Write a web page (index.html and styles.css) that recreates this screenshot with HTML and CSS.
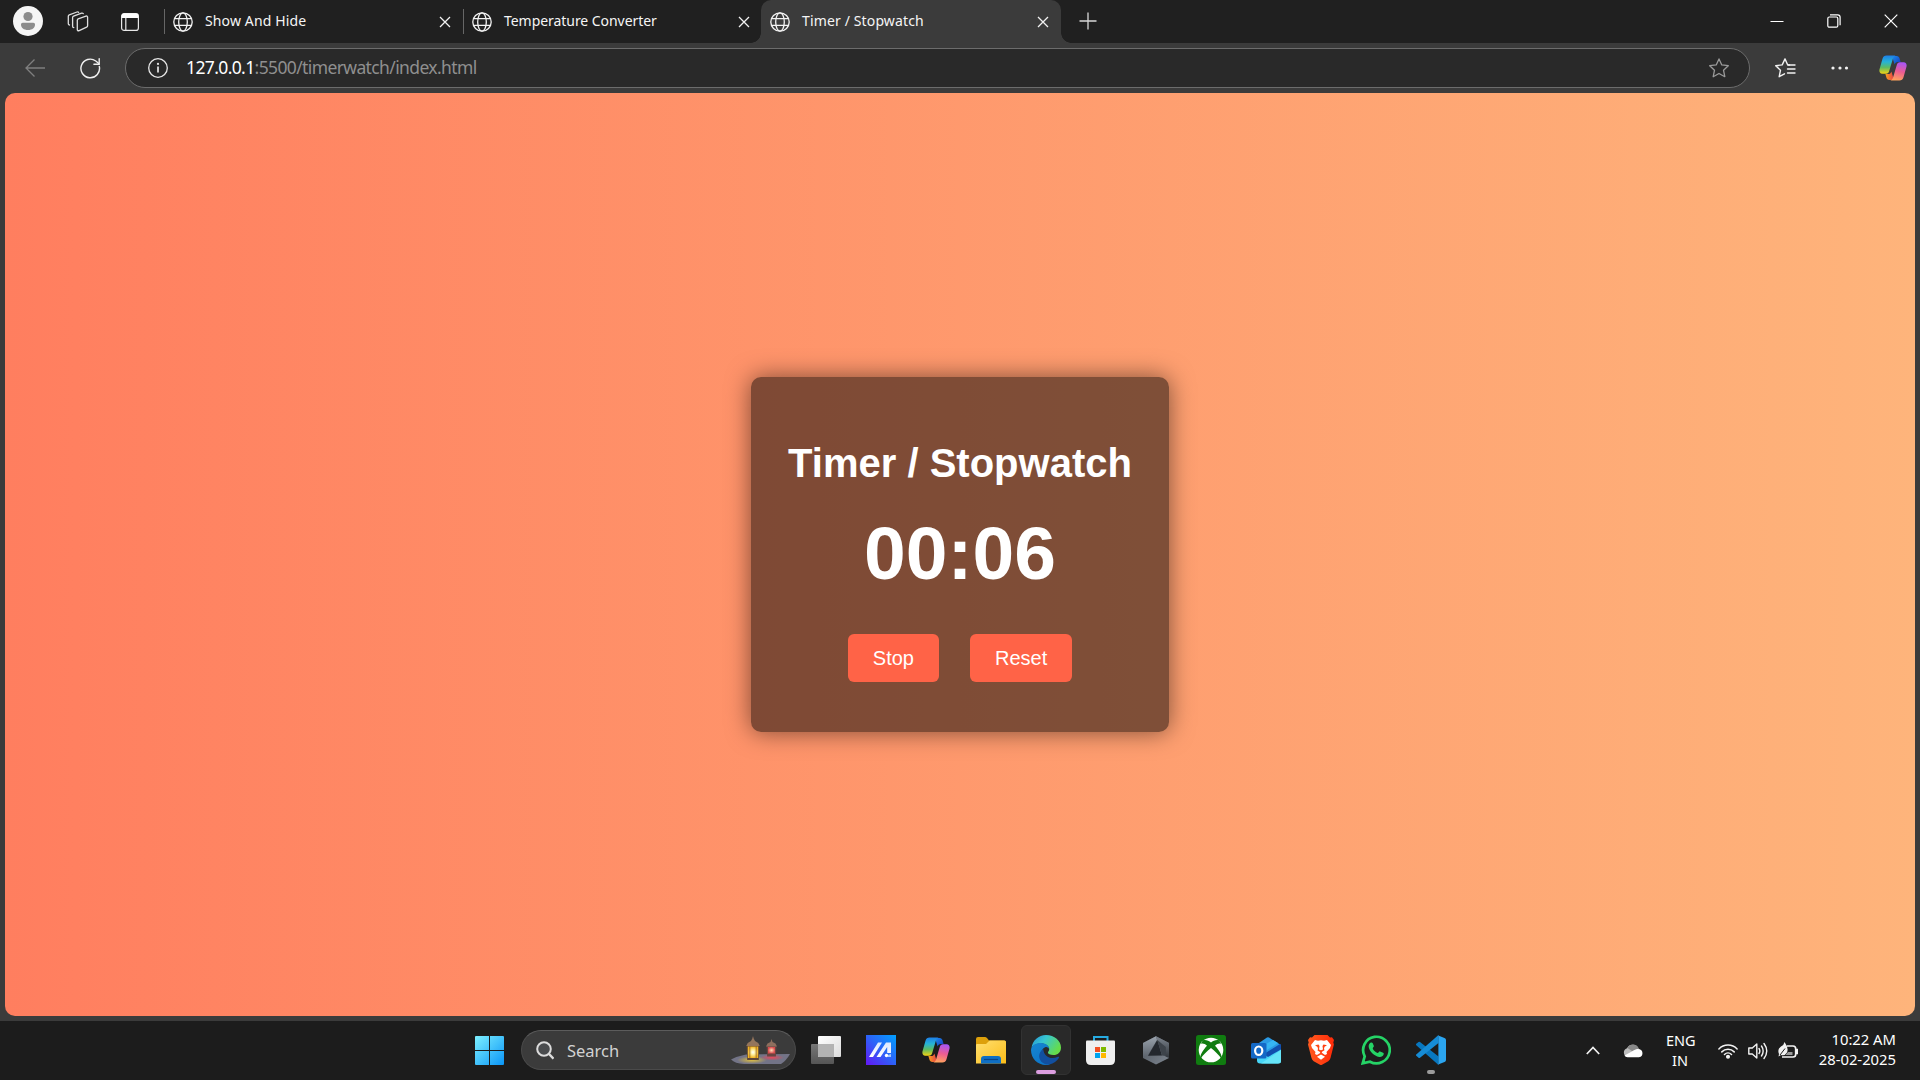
FILE: index.html
```html
<!DOCTYPE html>
<html lang="en">
<head>
<meta charset="utf-8">
<title>Timer / Stopwatch</title>
<link rel="stylesheet" href="styles.css">
</head>
<body>
<svg class="defs" width="0" height="0" aria-hidden="true">
  <defs>
    <linearGradient id="cpA" x1="0" y1="0" x2="0" y2="1"><stop offset="0" stop-color="#1d7fe8"/><stop offset=".35" stop-color="#26b3d6"/><stop offset=".65" stop-color="#5dbb63"/><stop offset="1" stop-color="#f5d312"/></linearGradient>
    <linearGradient id="cpB" x1=".6" y1="0" x2=".4" y2="1"><stop offset="0" stop-color="#a855f7"/><stop offset=".5" stop-color="#ec5c92"/><stop offset="1" stop-color="#ffa35c"/></linearGradient>
    <linearGradient id="cpC" x1="0" y1="0" x2="1" y2="1"><stop offset="0" stop-color="#1b8df0"/><stop offset="1" stop-color="#1636b8"/></linearGradient>
    <linearGradient id="cpD" x1="0" y1="0" x2="1" y2="0"><stop offset="0" stop-color="#f9a01b"/><stop offset="1" stop-color="#e63e4b"/></linearGradient>
    <symbol id="globe" viewBox="0 0 20 20"><g fill="none" stroke="#f2f2f2" stroke-width="1.3"><circle cx="10" cy="10" r="9.2"/><ellipse cx="10" cy="10" rx="4.3" ry="9.2"/><path d="M1.6 6.7h16.8M1.6 13.3h16.8"/></g></symbol>
    <symbol id="close" viewBox="0 0 12 12"><path d="M1 1l10 10M11 1L1 11" stroke="#f2f2f2" stroke-width="1.3" fill="none"/></symbol>
    <symbol id="copilot" viewBox="0 0 28 26">
      <path d="M13 1h4.6c1.6 0 2.6.9 3 2.4L21.600 7h-2.800c-1.700 0-2.700 1-3.200 2.600z" fill="url(#cpC)"/>
      <path d="M15 25h-4.600c-1.600 0-2.600-.9-3-2.400L6.400 19h2.800c1.700 0 2.700-1 3.200-2.600z" fill="url(#cpD)"/>
      <path d="M7.600.5h9c-1.500.4-2.300 1.700-2.800 3.400l-3.600 12.200c-.5 1.800-1.500 2.700-3.200 2.700H3.300C.8 18.800-.1 16.500.6 14L3.500 3.700C4.200 1.500 5.400.5 7.600.5z" fill="url(#cpA)"/>
      <path d="M20.400 25.500h-9c1.500-.4 2.300-1.700 2.800-3.400l3.600-12.200c.5-1.800 1.500-2.700 3.200-2.700h3.700c2.500 0 3.400 2.300 2.700 4.800l-2.900 10.300c-.7 2.200-1.900 3.200-4.100 3.200z" fill="url(#cpB)"/>
    </symbol>
  </defs>
</svg>

<header class="titlebar">
  <div class="profile">
    <svg width="30" height="30" viewBox="0 0 30 30"><circle cx="15" cy="15" r="15" fill="#f5f5f5"/><circle cx="15" cy="10.500" r="4.600" fill="#8c8c8c"/><path d="M8 18.500c0-1 .8-1.700 1.700-1.700h10.600c1 0 1.700.7 1.700 1.700 0 3.300-2.700 5.500-7 5.500s-7-2.200-7-5.500z" fill="#8c8c8c"/></svg>
  </div>
  <svg class="workspaces" width="22" height="21" viewBox="0 0 22 21" fill="none" stroke="#dedede" stroke-width="1.300" stroke-linejoin="round" stroke-linecap="round"><path d="M11.200 7.800l7.700-2.700q1.700-.4 1.700 1.200v8.400q0 1-1 1.400l-7.400 3.500q-1.900.6-1.900-1.200V9.200q0-1 .9-1.400z"/><path d="M6.800 16.600q-1.200 0-1.200-1.300V6.600q0-1 1-1.400L14.600 2.200q1-.3 1.700.4"/><path d="M2.500 14q-1.200-.2-1.200-1.300V5.300q0-1.100 1-1.500L10 1q1-.3 1.600.3"/></svg>
  <svg class="tabmenu" width="18" height="18" viewBox="0 0 18 18"><rect x=".6" y=".6" width="16.800" height="16.800" rx="2.500" fill="none" stroke="#e8e8e8" stroke-width="1.200"/><path d="M.6 5V3Q.6.6 3 .6h12q2.400 0 2.400 2.400v2z" fill="#fff"/><path d="M4.800 5v12" stroke="#e8e8e8" stroke-width="1.200"/></svg>
  <nav class="tabs">
    <div class="tab"><svg width="20" height="20"><use href="#globe"/></svg><span class="tab-title wide">Show And Hide</span><svg width="12" height="12"><use href="#close"/></svg></div>
    <div class="tab"><svg width="20" height="20"><use href="#globe"/></svg><span class="tab-title">Temperature Converter</span><svg width="12" height="12"><use href="#close"/></svg></div>
    <div class="tab active"><svg width="20" height="20"><use href="#globe"/></svg><span class="tab-title wide">Timer / Stopwatch</span><svg width="12" height="12"><use href="#close"/></svg></div>
  </nav>
  <svg class="newtab" width="18" height="18" viewBox="0 0 18 18" stroke="#d8d8d8" stroke-width="1.300"><path d="M9 .5v17M.5 9h17"/></svg>
  <div class="window-buttons">
    <svg width="14" height="14" viewBox="0 0 14 14"><path d="M.5 7.500h13" stroke="#fff"/></svg>
    <svg width="14" height="14" viewBox="0 0 14 14" fill="none" stroke="#fff" stroke-width="1.200"><rect x=".8" y="3" width="10" height="10.200" rx="1.500"/><path d="M3 .9h7.700q2.400 0 2.400 2.400v7.900"/></svg>
    <svg width="14" height="14" viewBox="0 0 14 14" stroke="#fff" stroke-width="1.200"><path d="M.7.7l12.600 12.600M13.300.7L.7 13.300"/></svg>
  </div>
</header>

<div class="toolbar">
  <svg class="back" width="20" height="18" viewBox="0 0 20 18" fill="none" stroke="#7f7f7f" stroke-width="1.300"><path d="M20 9H1M9.500.5L1 9l8.500 8.500"/></svg>
  <svg class="reload" width="21" height="21" viewBox="0 0 21 21" fill="none" stroke="#f0f0f0" stroke-width="1.400" stroke-linecap="round"><path d="M19.300 8.400A9.300 9.300 0 1 1 15.800 3L18.800 5.500"/><path d="M19.200.8v5.400h-5.300"/></svg>
  <div class="address">
    <svg width="20" height="20" viewBox="0 0 20 20"><circle cx="10" cy="10" r="9.300" fill="none" stroke="#e8e8e8" stroke-width="1.300"/><path d="M10 8.500v6" stroke="#e8e8e8" stroke-width="1.700"/><circle cx="10" cy="5.900" r="1.100" fill="#e8e8e8"/></svg>
    <span class="url"><b>127.0.0.1</b>:5500/timerwatch/index.html</span>
    <svg width="20" height="20" viewBox="0 0 20 20" fill="none" stroke="#9a9a9a" stroke-width="1.300" stroke-linejoin="round"><path d="M10 .9l2.800 6 6.500.8-4.800 4.500 1.300 6.500L10 15.500l-5.800 3.200 1.300-6.500L.7 7.700l6.500-.8z"/></svg>
  </div>
  <svg class="favorites" width="21" height="20" viewBox="0 0 21 20" fill="none" stroke="#f2f2f2" stroke-width="1.400" stroke-linejoin="round" stroke-linecap="round"><path d="M14.500 7l-1.900-.2L10 .9l-2.800 6-6.500.8 4.800 4.500-1.300 6.500 5.300-2.900"/><path d="M13 7h7M12.500 11h7.500M12.500 15h7.500"/></svg>
  <svg class="more" width="18" height="4" viewBox="0 0 18 4" fill="#f2f2f2"><circle cx="2" cy="2" r="1.600"/><circle cx="9" cy="2" r="1.600"/><circle cx="15.500" cy="2" r="1.600"/></svg>
  <svg class="copilot" width="28" height="26"><use href="#copilot"/></svg>
</div>

<div class="frame">
  <main class="page">
    <section class="container">
      <h1>Timer / Stopwatch</h1>
      <div class="timer">00:06</div>
      <div class="controls"><button>Stop</button><button>Reset</button></div>
    </section>
  </main>
</div>

<footer class="taskbar">
  <div class="apps">
    <div class="app">
      <svg width="30" height="30" viewBox="0 0 30 30"><defs><linearGradient id="win" x1="0" y1="0" x2="1" y2="1"><stop offset="0" stop-color="#7df0ff"/><stop offset="1" stop-color="#0a95f7"/></linearGradient></defs><path fill="url(#win)" d="M2 1h13v14H1V2q0-1 1-1zM16 1h13q1 0 1 1v13H16zM1 16h14v14H2q-1 0-1-1zM16 16h14v13q0 1-1 1H16z"/></svg>
    </div>
    <div class="search">
      <svg width="18" height="19" viewBox="0 0 18 19" fill="#4a4c4e" stroke="#dcdcdc" stroke-width="2"><circle cx="8" cy="8" r="6.800"/><path d="M12.800 12.800l4.700 5" stroke-width="2.400"/></svg>
      <span class="search-text">Search</span>
      <svg class="lanterns" width="60" height="30" viewBox="0 0 60 30">
        <defs>
          <radialGradient id="glow"><stop offset="0" stop-color="#fff"/><stop offset=".4" stop-color="#fff0a0"/><stop offset="1" stop-color="#f2b524"/></radialGradient>
          <radialGradient id="red"><stop offset="0" stop-color="#ffe0b8"/><stop offset="1" stop-color="#d94a4c"/></radialGradient>
          <radialGradient id="poolA"><stop offset="0" stop-color="#e0c040"/><stop offset="1" stop-color="#e0c040" stop-opacity="0"/></radialGradient>
          <radialGradient id="poolB"><stop offset="0" stop-color="#e8485a"/><stop offset="1" stop-color="#e8485a" stop-opacity="0"/></radialGradient>
        </defs>
        <path d="M0 23.500q7-3.500 15-5L59 18q-4 7-9 10H13Q4 27.500 0 23.500z" fill="#737487"/>
        <ellipse cx="21" cy="24" rx="15" ry="3.800" fill="url(#poolA)"/><ellipse cx="41" cy="21.500" rx="12" ry="3" fill="url(#poolB)"/>
        <path d="M15.600 10h12.800l-.6 14h-11.600z" fill="#5e4637"/><path d="M15.200 10l1.500-3 3.300-2L21.300 2.500 22 0l.7 2.500L24 5l3.300 2 1.500 3z" fill="#94755c"/><path d="M16.800 10.500h10.400v11.500H16.800z" fill="url(#glow)"/><path d="M18.800 10v12M25.200 10v12" stroke="#8a5a26" stroke-width=".7"/>
        <path d="M35.600 10h9.800l-.5 10.500h-8.800z" fill="#694440"/><path d="M35 10.500l1.500-3L39.500 6l1-3 1 3 3 1.500 1.500 3z" fill="#8d6f5e"/><path d="M37 11h7v6.500h-7z" fill="url(#red)"/>
      </svg>
    </div>
    <div class="app"><svg width="30" height="30" viewBox="0 0 30 30"><defs><linearGradient id="tv1" x1="0" y1="0" x2="1" y2="1"><stop offset="0" stop-color="#fff"/><stop offset="1" stop-color="#dcdcdc"/></linearGradient><linearGradient id="tv2" x1="0" y1="0" x2="0" y2="1"><stop offset="0" stop-color="#777"/><stop offset="1" stop-color="#555"/></linearGradient></defs><rect x="0" y="9" width="23" height="20" rx="1" fill="url(#tv2)"/><rect x="7" y="1" width="23" height="21" rx="1" fill="url(#tv1)"/><path d="M7 9h16v13H8q-1 0-1-1z" fill="#b3b3b3"/></svg></div>
    <div class="app"><svg width="30" height="30" viewBox="0 0 30 30"><defs><linearGradient id="asus" x1="0" y1="1" x2="1" y2="0"><stop offset="0" stop-color="#6416f5"/><stop offset=".5" stop-color="#2d62f8"/><stop offset="1" stop-color="#00a2ff"/></linearGradient><linearGradient id="stripe" x1="0" y1="1" x2="0" y2="0"><stop offset="0" stop-color="#fff"/><stop offset="1" stop-color="#dbe8ff"/></linearGradient></defs><path fill="url(#asus)" d="M0 0h30v30H0z"/><path fill="url(#stripe)" d="M3 22L12 7.500h4L7 22zM10.500 22L20 7.500h5V18h-3.800v-6L14.500 22z"/><circle cx="20.500" cy="20.500" r="1.700" fill="#fff"/><path d="M22 20l3-1v3h-3z" fill="#a9c9ff"/></svg></div>
    <div class="app"><svg width="28" height="26"><use href="#copilot"/></svg></div>
    <div class="app"><svg width="30" height="30" viewBox="0 0 30 30"><defs><linearGradient id="fold" x1="0" y1="0" x2="1" y2="1"><stop offset="0" stop-color="#ffdf70"/><stop offset="1" stop-color="#fbbd18"/></linearGradient></defs><path d="M0 13V4q0-2 2-2h7q1 0 2 1l2 2.500h15q2 0 2 2V10z" fill="#dda00b"/><path d="M0 10q0-1 1-1h9l3.500-3.500H28.500q1.500 0 1.500 1.500v21.500H0z" fill="url(#fold)"/><path d="M5 28.500V24q0-3 3-3h14q3 0 3 3v4.500z" fill="#0f6fc4"/><path d="M8 24.500h14" stroke="#0a4488" stroke-width="1.200"/></svg></div>
    <div class="app current"><svg width="30" height="30" viewBox="0 0 30 30"><defs><linearGradient id="eg1" x1="0" y1="0" x2="1" y2=".5"><stop offset="0" stop-color="#2490d8"/><stop offset=".45" stop-color="#37c6d0"/><stop offset="1" stop-color="#65dc4b"/></linearGradient><linearGradient id="eg2" x1="0" y1="0" x2=".6" y2="1"><stop offset="0" stop-color="#1686d2"/><stop offset="1" stop-color="#0d75c8"/></linearGradient></defs>
      <path d="M.5 13C1.500 5.500 7.500 0 15 0c8.500 0 15 6 15 12.500 0 4.700-3.300 7.600-7.500 7.600-3.500 0-5.600-1.100-5.600-2.500 0-.9 1.300-1.400 1.300-3.400 0-3-3.300-5.700-8-5.700C5.600 8.500 1.500 10.500.5 13z" fill="url(#eg1)"/>
      <path d="M0 15C.2 10.500 4.700 8 9.500 8c5.200 0 8.700 2.900 8.700 6.200-.5-1.500-2-2.500-3.500-2.200-3 .8-5 4.600-4.600 8.200.5 4.800 4.200 8.200 8.900 9.200C9 32 0 25 0 15z" fill="url(#eg2)"/>
      <path d="M12.200 14c-3.300 2.200-4.600 6-3.700 9.200 1 4 5.500 6.800 10 6.300 4-.7 7.700-3.400 9.500-6.700.4-.8-.3-1.400-1.100-1-6.400 3-14 .5-14.700-7.800z" fill="#124f9f"/></svg></div>
    <div class="app"><svg width="30" height="30" viewBox="0 0 30 30"><path d="M8 6V2h13.500v4" fill="none" stroke="#26abe2" stroke-width="2"/><path d="M0 6.500q0-1 1-1h27q1 0 1 1V25q0 5-5 5H5q-5 0-5-5z" fill="#efefef"/><path d="M9 12h5v5H9z" fill="#f25022"/><path d="M15 12h5v5h-5z" fill="#7fba00"/><path d="M9 18h5v5H9z" fill="#00a4ef"/><path d="M15 18h5v5h-5z" fill="#ffb900"/></svg></div>
    <div class="app"><svg width="30" height="30" viewBox="0 0 30 30"><defs><linearGradient id="hexL" x1="0" y1="0" x2="0" y2="1"><stop offset="0" stop-color="#9aa3ad"/><stop offset="1" stop-color="#5a616a"/></linearGradient><linearGradient id="hexR" x1="0" y1="0" x2="0" y2="1"><stop offset="0" stop-color="#7c848e"/><stop offset="1" stop-color="#2f343a"/></linearGradient><linearGradient id="hexB" x1="0" y1="0" x2="1" y2="1"><stop offset="0" stop-color="#4d535b"/><stop offset="1" stop-color="#7d858f"/></linearGradient></defs><path d="M15 1.300L28 8v15l-13 6.500L2 23V8z" fill="url(#hexB)"/><path d="M15 1.300L2 8v15l5-3 9-15z" fill="url(#hexL)"/><path d="M15 1.300L28 8v15l-3.500-1.500L16 5z" fill="url(#hexR)"/><path d="M16.300 5L21 20.500l-14 .3z" fill="#24282e"/><path d="M16.300 5l8.500 7v9L21 20.500z" fill="#3d434a"/></svg></div>
    <div class="app"><svg width="30" height="30" viewBox="0 0 30 30"><rect width="30" height="30" rx="2.500" fill="#107c10"/><circle cx="15" cy="15" r="12.300" fill="#fff"/><path d="M7 5.300C10 4.500 13 6 15 7.500 17 6 20 4.500 23 5.300L25.500 9c-2-1-4.500-.2-6.500 1.800 4.500 4.800 7.500 10 6.300 12.800C23 20 18.500 15.500 15 13 11.500 15.500 7 20 4.700 23.600 3.500 20.800 6.500 15.600 11 10.800 9 8.800 6.500 8 4.500 9z" fill="#107c10"/></svg></div>
    <div class="app"><svg width="30" height="30" viewBox="0 0 30 30"><path d="M5 10L16 2.500q1-.6 2 0L30 10v4L12 25 5 16z" fill="#2a9ae4"/><path d="M10 12l12-7 5 3-14 9z" fill="#36b5f3"/><path d="M13 19L29 9l1 1v5L16 23z" fill="#114fae"/><path d="M6 21l10-2.500L30 12v14q0 2.500-3 2.500H9q-3 0-3-3z" fill="#47d6f7"/><path d="M13 19.500L30 9.500v5L17 22z" fill="#114fae"/><path d="M10 28.500L30 15v11q0 2.500-3 2.500z" fill="#66e4f8"/><rect y="8" width="15.500" height="15.500" rx="1.500" fill="#1469c7"/><ellipse cx="7.700" cy="15.700" rx="3.600" ry="4.200" fill="none" stroke="#fff" stroke-width="2.200"/></svg></div>
    <div class="app"><svg width="30" height="30" viewBox="0 0 30 30"><defs><linearGradient id="br"><stop offset="0" stop-color="#ff5a1f"/><stop offset="1" stop-color="#ff2a08"/></linearGradient></defs><path d="M8.500 0h13L24 2.500l2-.2L28 5l-.7 2.500.6 2L24.500 23q-.5 2-2.200 3.200L16 29.700q-1 .5-2 0l-6.300-3.500Q6 25 5.500 23L2 9.500l.7-2L2 5l2-2.700 2 .2z" fill="url(#br)"/><path d="M9 5l3 .7 3-.5 3 .5 3-.7 4 5-1 3-3.500 4 .5 2-2 1-3.200-2.200.2-1 2.500-1.500-.5-1.500.5-2 2.500-1.500-3.500-.8-1 1.500.5 3.500-2 .8-2-.8.500-3.500-1-1.500-3.500.8L11.500 12l.5 2-.5 1.500 2.500 1.500.2 1L11 20l-2-1 .5-2L6 13l-1-3z" fill="#fff"/><path d="M15 19.500l4 2.200-4 3-4-3z" fill="#fff"/></svg></div>
    <div class="app"><svg width="30" height="30" viewBox="0 0 30 30"><path d="M1.700 28.300l2-7A13.300 13.300 0 1 1 9 26.700z" fill="none" stroke="#25d366" stroke-width="2.700"/><path d="M9.800 7.500c.8-.3 1.500 0 1.800.6l1.300 3c.3.700-1.500 1.900-1.100 2.600 1.100 2 2.600 3.400 4.800 4.300.7.300 1.800-1.900 2.500-1.600l3 1.400c.6.300.8.700.6 1.400-.7 2-2.500 3-4.500 2.700C13 21 8.300 16.300 7.700 12c-.2-1.900.6-3.700 2.100-4.500z" fill="#25d366"/></svg></div>
    <div class="app running"><svg width="30" height="30" viewBox="0 0 30 30"><path d="M0 9l2.500-2q.7-.5 1.500 0L22.500 21.500V30L.5 10.500Q-.3 9.800 0 9z" fill="#0877bf"/><path d="M0 20.500l2.500 2.200q.7.500 1.500 0L22.500 8V0L.5 19.200q-.8.700-.5 1.300z" fill="#168cd6"/><path d="M21.500.2L28.500 3Q30 3.700 30 5v20q0 1.300-1.500 2l-7 2.800q.9-.3.900-1.500V1.700q0-1.200-.9-1.500z" fill="#2ba5f0"/></svg></div>
  </div>
  <div class="tray">
    <svg class="chev" width="14" height="9" viewBox="0 0 14 9" fill="none" stroke="#f2f2f2" stroke-width="1.700"><path d="M.8 8L7 1.500 13.200 8"/></svg>
    <svg class="cloud" width="20" height="14" viewBox="0 0 20 14"><path d="M4.500 13A4.500 4.500 0 0 1 4 4.300 6.500 6.500 0 0 1 15.800 5 4.200 4.200 0 0 1 16 13z" fill="#bcbcbc"/><path d="M4.500 4A6 6 0 0 1 15.800 5L9 7z" fill="#888"/><path d="M1.500 11.500L12 5.800q2-1.200 4-.6A4.100 4.100 0 0 1 16 13.300H4.500q-2 0-3-1.800z" fill="#fff"/></svg>
    <div class="lang">ENG<br>IN</div>
    <div class="status">
      <svg width="20" height="16" viewBox="0 0 20 16" fill="none" stroke="#f2f2f2" stroke-width="1.500" stroke-linecap="round"><path d="M.9 6a12.500 12.500 0 0 1 18.200 0M3.800 8.900a8.700 8.700 0 0 1 12.400 0M6.500 11.500a5 5 0 0 1 7 0"/><circle cx="10" cy="13.800" r="1.300" fill="#f2f2f2"/></svg>
      <svg width="20" height="18" viewBox="0 0 20 18" fill="none" stroke="#f2f2f2" stroke-width="1.400" stroke-linejoin="round" stroke-linecap="round"><path d="M.8 6h3.500l4.500-4v14l-4.500-4H.8zM11 6.500q1.700 2.500 0 5M13.500 4q3.300 5 0 10M16 1.500q5.500 7.500 0 15"/></svg>
      <svg width="20" height="18" viewBox="0 0 20 18"><path d="M9 4h6q2.700 0 2.700 2.700v5.600q0 2.700-2.700 2.700H4M18 7.700h1.300v3.600H18" fill="none" stroke="#f2f2f2" stroke-width="1.700"/><path d="M6.500 0Q11 6 9 10.500 7 14 3 13L.5 14.500 1 12Q-1 7 3 4.500 6 3 6.500 0z" fill="#f2f2f2"/><path d="M2 13l5-6.500" stroke="#1c1c1c"/><path d="M10 10h4.500v3H7.500z" fill="#999"/></svg>
    </div>
    <div class="clock"><span>10:22 AM</span><span>28-02-2025</span></div>
  </div>
</footer>
</body>
</html>
```
FILE: styles.css
```css
* { box-sizing: border-box; }
body {
  margin: 0;
  width: 1920px;
  height: 1080px;
  overflow: hidden;
  display: flex;
  flex-direction: column;
  background: #3b3b3b;
  font-family: "Noto Sans", "Open Sans", sans-serif;
  color: #fff;
}
svg { display: block; flex: none; }
.defs { position: absolute; }

.titlebar { height: 43px; background: #202020; display: flex; align-items: center; padding-left: 13px; flex: none; }
.profile { margin-top: -1px; }
.workspaces { margin-left: 24px; }
.tabmenu { margin-left: 32px; }
.tabs { display: flex; align-self: stretch; margin-left: 25px; }
.tab { position: relative; width: 299px; height: 43px; display: flex; align-items: center; padding: 1px 12px 0 9px; font-size: 14px; }
.tab:nth-child(-n+2)::before { content: ""; position: absolute; left: 0; top: 9px; width: 1px; height: 25px; background: #666; }
.tab-title { flex: 1; margin-left: 12px; margin-top: -3px; white-space: nowrap; color: #f5f5f5; letter-spacing: -.05px; }
.tab-title.wide { letter-spacing: .14px; }
.tab.active { background: #3b3b3b; border-radius: 10px 10px 0 0; margin-left: -1px; width: 300px; }
.tab.active::before, .tab.active::after { content: ""; position: absolute; bottom: 0; width: 10px; height: 10px; }
.tab.active::before { left: -10px; background: radial-gradient(circle at 0 0, #202020 9.500px, #3b3b3b 10px); }
.tab.active::after { right: -10px; background: radial-gradient(circle at 100% 0, #202020 9.500px, #3b3b3b 10px); }
.newtab { margin-left: 18px; margin-top: -1px; }
.window-buttons { display: flex; gap: 43px; margin-left: auto; margin-right: 22px; margin-top: -1px; }

.toolbar { height: 50px; background: #3b3b3b; display: flex; align-items: center; padding-left: 25px; flex: none; }
.reload { margin-left: 35px; }
.address { margin-left: 24px; width: 1625px; height: 40px; border: 1px solid #6c6c6c; border-radius: 20px; background: #292929; display: flex; align-items: center; padding: 0 20px 0 22px; }
.url { flex: 1; margin: -2px 0 0 18px; font-size: 17.500px; letter-spacing: -.62px; color: #8f8f8f; white-space: nowrap; }
.url b { font-weight: 400; color: #fff; }
.favorites { margin-left: 25px; }
.more { margin-left: 35px; }
.copilot { margin-left: 30px; }

.frame { height: 928px; padding: 0 5px 5px; flex: none; }
.page {
  height: 923px;
  border-radius: 10px;
  background: linear-gradient(to right, #ff7e5f, #feb47b);
  display: flex;
  align-items: center;
  justify-content: center;
  font-family: "Liberation Sans", Arial, sans-serif;
}
.container { width: 418px; height: 355px; background: rgba(0, 0, 0, .5); border-radius: 10px; box-shadow: 0 0 25px rgba(0, 0, 0, .5); text-align: center; padding-top: 63px; }
h1 { margin: 0; font-size: 40px; line-height: 46px; white-space: nowrap; }
.timer { margin-top: 24px; font-size: 75px; font-weight: bold; line-height: 86px; }
.controls { display: flex; justify-content: center; gap: 31px; margin-top: 38px; }
button { height: 48px; padding: 0 25px; border: 0; border-radius: 6px; background: #ff6347; color: #fff; font: 20px "Liberation Sans", Arial, sans-serif; }

.taskbar { height: 59px; background: #1c1c1c; display: flex; justify-content: space-between; padding-left: 464px; padding-right: 24px; flex: none; }
.apps { display: flex; gap: 5px; height: 50px; margin-top: 4px; align-items: center; }
.app { position: relative; width: 50px; height: 50px; display: flex; align-items: center; justify-content: center; border-radius: 6px; }
.app.current { background: #292929; border: 1px solid #323232; }
.app.current::after, .app.running::after { content: ""; position: absolute; bottom: 1px; left: 50%; transform: translateX(-50%); height: 4px; border-radius: 2px; }
.app.current::after { width: 20px; background: #dc9ee0; bottom: 0; }
.app.running::after { width: 8px; background: #9b9b9b; }
.search { width: 275px; height: 40px; margin-left: 2px; border-radius: 20px; background: #3b3b3b; border: 1px solid #4a4a4a; border-top-color: #5c5c5c; display: flex; align-items: center; padding: 0 4px 0 14px; }
.search-text { margin-left: 13px; flex: 1; color: #d2d2d2; font-size: 16.500px; }
.lanterns { margin-top: 2px; }
.tray { display: flex; align-items: center; }
.chev { margin-right: 23px; }
.cloud { margin-right: 24px; }
.lang { width: 28px; font-size: 14.500px; line-height: 20px; display: flow-root; text-align: center; white-space: nowrap; margin: -2px 0 0 -1px; }
.status { display: flex; gap: 10px; align-items: center; margin: 0 21px 0 24px; }
.clock { width: 77px; display: flex; flex-direction: column; align-items: flex-end; font-size: 14.800px; line-height: 20px; white-space: nowrap; margin-top: -4px; }
```
